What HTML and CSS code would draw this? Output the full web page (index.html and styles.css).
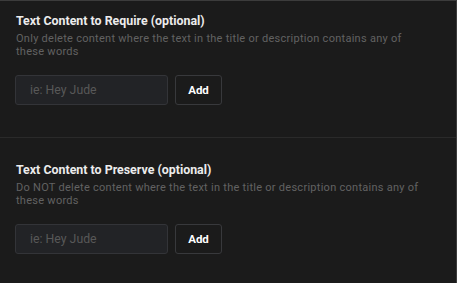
FILE: index.html
```html
<!DOCTYPE html>
<html lang="en">
<head>
    <meta charset="UTF-8">
    <meta name="viewport" content="width=device-width, initial-scale=1.0">
    <title>Content Filters</title>
    <link rel="stylesheet" href="styles.css">
</head>
<body>
    <div class="panel">
        <div class="section first">
            <h3 class="section-title">Text Content to Require (optional)</h3>
            <p class="section-desc">Only delete content where the text in the title or description contains any of these words</p>
            <div class="add-row">
                <input type="text" class="word-input" placeholder="ie: Hey Jude">
                <button class="add-btn">Add</button>
            </div>
        </div>

        <div class="section">
            <h3 class="section-title">Text Content to Preserve (optional)</h3>
            <p class="section-desc">Do NOT delete content where the text in the title or description contains any of these words</p>
            <div class="add-row">
                <input type="text" class="word-input" placeholder="ie: Hey Jude">
                <button class="add-btn">Add</button>
            </div>
        </div>
    </div>
</body>
</html>
```

FILE: styles.css
```css
body {
    margin: 0;
    background-color: #1b1b1b;
    font-family: Roboto, "Liberation Sans", Arial, sans-serif;
}

.panel {
    height: 282px;
    border-top: 1px solid #3c3c3c;
    border-right: 1px solid #3c3c3c;
    overflow: hidden;
}

.section {
    padding: 24px 15px 28px 15px;
    border-top: 1px solid #2a2a2a;
}

.section.first {
    padding-top: 12px;
    padding-bottom: 32px;
    border-top: none;
}

.section-title {
    margin: 0;
    font-size: 12.4px;
    line-height: 16px;
    font-weight: 700;
    color: #ececec;
    padding-left: 1px;
}

.section-desc {
    max-width: 410px;
    margin: 3px 0 0 0;
    padding-left: 1px;
    font-size: 11px;
    line-height: 13px;
    color: #626262;
    letter-spacing: 0.27px;
}

.add-row {
    display: flex;
    gap: 7px;
    margin-top: 17px;
}

.word-input {
    width: 153px;
    height: 30px;
    box-sizing: border-box;
    padding: 0 14px;
    background-color: #222326;
    border: 1px solid #333438;
    border-radius: 3px;
    color: #cccccc;
    font-family: inherit;
    font-size: 12.3px;
    outline: none;
}

.word-input::placeholder {
    color: #585858;
}

.add-btn {
    width: 47px;
    height: 30px;
    box-sizing: border-box;
    background-color: #1b1b1b;
    border: 1px solid #38393c;
    border-radius: 3px;
    color: #ffffff;
    font-family: inherit;
    font-size: 11.5px;
    font-weight: 700;
    cursor: pointer;
}
```
